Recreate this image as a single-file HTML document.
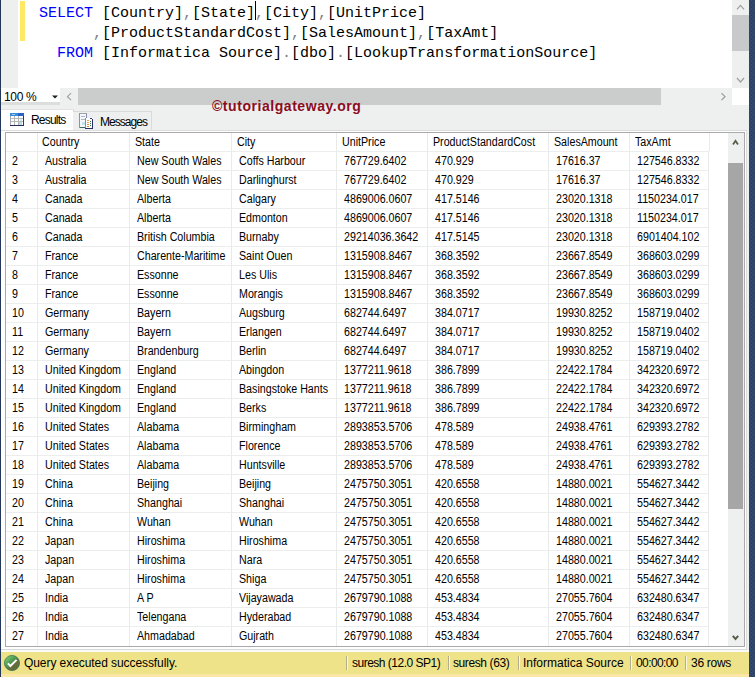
<!DOCTYPE html>
<html><head><meta charset="utf-8">
<style>
*{margin:0;padding:0;box-sizing:border-box}
html,body{width:755px;height:677px;overflow:hidden;background:#eef0f0;position:relative;font-family:"Liberation Sans",sans-serif}
.a{position:absolute}
.navyL{position:absolute;left:0;top:0;width:1px;height:677px;background:#22375a}
.navyR{position:absolute;left:749px;top:0;width:6px;height:677px}
.code{position:absolute;left:39px;font-family:"Liberation Mono",monospace;font-size:15px;line-height:20px;white-space:pre;color:#000}
.kw{color:#0000ff} .gr{color:#808080}
.t{position:absolute;font-size:12px;line-height:18px;white-space:pre;color:#000;transform:scaleX(0.89);transform-origin:0 0}
.vl{position:absolute;width:1px;background:#e9ebeb}
.hl{position:absolute;left:6px;width:702px;height:1px;background:#eceeee}
</style></head><body>
<div class="navyL"></div>
<svg class="navyR" width="6" height="677"><defs><pattern id="dp" x="0" y="0" width="4" height="4" patternUnits="userSpaceOnUse"><rect width="4" height="4" fill="#31466b"/><rect x="0" y="1" width="1" height="1" fill="#28385a"/><rect x="2" y="3" width="1" height="1" fill="#28385a"/><rect x="0" y="2" width="1" height="1" fill="#384d72"/><rect x="2" y="0" width="1" height="1" fill="#384d72"/></pattern></defs><rect width="6" height="677" fill="url(#dp)" shape-rendering="crispEdges"/></svg>

<!-- editor -->
<div class="a" style="left:1px;top:0;width:17px;height:88px;background:#eef0f0"></div>
<div class="a" style="left:18px;top:0;width:714px;height:88px;background:#fff"></div>
<div class="a" style="left:20px;top:1px;width:5px;height:40px;background:#ffe866"></div>
<div class="code" style="top:4px"><span class="kw">SELECT</span> [Country]<span class="gr">,</span>[State]<span class="gr">,</span>[City]<span class="gr">,</span>[UnitPrice]</div>
<div class="code" style="top:24px">      <span class="gr">,</span>[ProductStandardCost]<span class="gr">,</span>[SalesAmount]<span class="gr">,</span>[TaxAmt]</div>
<div class="code" style="top:44px">  <span class="kw">FROM</span> [Informatica Source]<span class="gr">.</span>[dbo]<span class="gr">.</span>[LookupTransformationSource]</div>
<div class="a" style="left:255px;top:1px;width:1px;height:19px;background:#000"></div>

<!-- editor vscroll -->
<div class="a" style="left:732px;top:0;width:17px;height:88px;background:#eef0f0"></div>
<div class="a" style="left:732px;top:15px;width:17px;height:36px;background:#c8c9ca"></div>
<svg class="a" style="left:732px;top:0" width="17" height="88"><polyline points="5,9.3 8.5,5.3 12,9.3" fill="none" stroke="#9e9e9e" stroke-width="1.2"/><polyline points="5,78 8.5,82 12,78" fill="none" stroke="#9e9e9e" stroke-width="1.2"/></svg>

<!-- zoom bar -->
<div class="a" style="left:1px;top:88px;width:59px;height:14px;background:#fff"></div>
<div class="a" style="left:1px;top:102px;width:59px;height:3px;background:#dcdddd"></div>
<div class="a" style="left:4px;top:90px;font-size:12px;letter-spacing:-0.35px;line-height:14px;color:#000">100 %</div>
<svg class="a" style="left:50px;top:94px" width="10" height="6"><polygon points="2,1.5 8,1.5 5,4.5" fill="#1e1e1e"/></svg>
<svg class="a" style="left:64px;top:90px" width="10" height="12"><polyline points="7,3.2 3.5,6.7 7,10.2" fill="none" stroke="#a0a0a0" stroke-width="1.2"/></svg>
<div class="a" style="left:78px;top:88px;width:583px;height:17px;background:#cbcccc"></div>
<svg class="a" style="left:718px;top:90px" width="10" height="12"><polyline points="3.5,3.2 7,6.7 3.5,10.2" fill="none" stroke="#9a9a9a" stroke-width="1.2"/></svg>
<div class="a" style="left:732px;top:88px;width:17px;height:17px;background:#fff"></div>

<!-- watermark -->
<div class="a" style="left:212px;top:96.5px;font-size:14px;letter-spacing:0.55px;line-height:18px;font-weight:bold;color:#8b0d1e;white-space:pre">©tutorialgateway.org</div>

<!-- tabs -->
<div class="a" style="left:1px;top:109px;width:73px;height:23px;background:#fff;border-top:1px solid #e2e2e2;border-right:1px solid #dadada"></div>
<div class="a" style="left:73px;top:111px;width:79px;height:20px;background:#eef0f0;border:1px solid #dadada;border-left:none;border-bottom:none"></div>
<div class="a" style="left:31px;top:112px;font-size:12px;letter-spacing:-0.8px;line-height:16px">Results</div>
<div class="a" style="left:100px;top:114px;font-size:12px;letter-spacing:-0.95px;line-height:16px">Messages</div>
<svg class="a" style="left:10px;top:113px" width="14" height="13" shape-rendering="crispEdges">
 <rect x="0" y="0" width="14" height="13" fill="#fff"/>
 <rect x="0" y="0" width="14" height="3" fill="#3a8fdc"/>
 <rect x="8" y="0" width="6" height="3" fill="#2a62c8"/>
 <rect x="2" y="1" width="3" height="1" fill="#9cc8f0"/>
 <rect x="0" y="3" width="1" height="10" fill="#a8a8b8"/>
 <rect x="4" y="3" width="1" height="9" fill="#b4b4b4"/>
 <rect x="8" y="3" width="1" height="9" fill="#b4b4b4"/>
 <rect x="1" y="5" width="12" height="1" fill="#b8b8b8"/>
 <rect x="1" y="8" width="12" height="1" fill="#b8b8b8"/>
 <rect x="10" y="6" width="2" height="2" fill="#c8ecf8"/>
 <rect x="9" y="9" width="3" height="3" fill="#a8e0f8"/>
 <rect x="13" y="3" width="1" height="10" fill="#303858"/>
 <rect x="0" y="12" width="14" height="1" fill="#2a2f58"/>
</svg>
<svg class="a" style="left:79px;top:113px" width="15" height="16" shape-rendering="crispEdges">
 <rect x="0" y="0" width="8" height="15" fill="#f4f8fc"/>
 <rect x="0" y="0" width="8" height="1" fill="#a0a0a8"/>
 <rect x="0" y="0" width="1" height="15" fill="#8c8cc8"/>
 <rect x="1" y="14" width="7" height="1" fill="#3a6a58"/>
 <rect x="7" y="1" width="1" height="6" fill="#8888b0"/>
 <rect x="2" y="3" width="4" height="1" fill="#a8b8c8"/>
 <rect x="2" y="6" width="4" height="1" fill="#b0b8c0"/>
 <rect x="3" y="9" width="3" height="3" fill="#c0e4f4"/>
 <rect x="6" y="5" width="8" height="11" fill="#ffffff"/>
 <rect x="13" y="6" width="1" height="10" fill="#2a2f6a"/>
 <rect x="6" y="15" width="8" height="1" fill="#2a2f6a"/>
 <rect x="11" y="5" width="2" height="1" fill="#3a3a7a"/>
 <rect x="6" y="5" width="1" height="10" fill="#8888c0"/>
 <rect x="8" y="7" width="2" height="1" fill="#f0a040"/>
 <rect x="8" y="9" width="2" height="1" fill="#f0a040"/>
 <rect x="8" y="11" width="2" height="1" fill="#e89030"/>
 <rect x="8" y="13" width="2" height="1" fill="#e08020"/>
 <rect x="11" y="8" width="1" height="1" fill="#2a6a4a"/>
 <rect x="11" y="10" width="1" height="1" fill="#2a6a4a"/>
 <rect x="11" y="12" width="1" height="1" fill="#1a7a4a"/>
</svg>

<!-- grid frame -->
<div class="a" style="left:1px;top:130px;width:746px;height:520px;background:#fff;border-top:1px solid #dcdcdc;border-right:1px solid #dcdcdc;border-bottom:1px solid #d8d8d8"></div>
<div class="a" style="left:5px;top:132px;width:740px;height:515px;border:1px solid #a8a8ad;background:#fff"></div>

<div class="a" style="left:6px;top:151px;width:703px;height:1px;background:#e8e8e8"></div>
<div class="t h" style="left:42px;top:133px">Country</div>
<div class="t h" style="left:135px;top:133px">State</div>
<div class="t h" style="left:237px;top:133px">City</div>
<div class="t h" style="left:342px;top:133px">UnitPrice</div>
<div class="t h" style="left:433px;top:133px">ProductStandardCost</div>
<div class="t h" style="left:554px;top:133px">SalesAmount</div>
<div class="t h" style="left:635px;top:133px">TaxAmt</div>
<div class="vl" style="left:37px;top:133px;height:18px"></div>
<div class="vl" style="left:129px;top:133px;height:18px"></div>
<div class="vl" style="left:231px;top:133px;height:18px"></div>
<div class="vl" style="left:336px;top:133px;height:18px"></div>
<div class="vl" style="left:427px;top:133px;height:18px"></div>
<div class="vl" style="left:548px;top:133px;height:18px"></div>
<div class="vl" style="left:629px;top:133px;height:18px"></div>
<div class="vl" style="left:709px;top:133px;height:18px"></div>
<div class="hl" style="top:151px"></div>
<div class="t" style="left:12px;top:152px">2</div>
<div class="t" style="left:45px;top:152px">Australia</div>
<div class="t" style="left:137px;top:152px">New South Wales</div>
<div class="t" style="left:239px;top:152px">Coffs Harbour</div>
<div class="t" style="left:344px;top:152px">767729.6402</div>
<div class="t" style="left:435px;top:152px">470.929</div>
<div class="t" style="left:556px;top:152px">17616.37</div>
<div class="t" style="left:637px;top:152px">127546.8332</div>
<div class="hl" style="top:170px"></div>
<div class="t" style="left:12px;top:171px">3</div>
<div class="t" style="left:45px;top:171px">Australia</div>
<div class="t" style="left:137px;top:171px">New South Wales</div>
<div class="t" style="left:239px;top:171px">Darlinghurst</div>
<div class="t" style="left:344px;top:171px">767729.6402</div>
<div class="t" style="left:435px;top:171px">470.929</div>
<div class="t" style="left:556px;top:171px">17616.37</div>
<div class="t" style="left:637px;top:171px">127546.8332</div>
<div class="hl" style="top:189px"></div>
<div class="t" style="left:12px;top:190px">4</div>
<div class="t" style="left:45px;top:190px">Canada</div>
<div class="t" style="left:137px;top:190px">Alberta</div>
<div class="t" style="left:239px;top:190px">Calgary</div>
<div class="t" style="left:344px;top:190px">4869006.0607</div>
<div class="t" style="left:435px;top:190px">417.5146</div>
<div class="t" style="left:556px;top:190px">23020.1318</div>
<div class="t" style="left:637px;top:190px">1150234.017</div>
<div class="hl" style="top:208px"></div>
<div class="t" style="left:12px;top:209px">5</div>
<div class="t" style="left:45px;top:209px">Canada</div>
<div class="t" style="left:137px;top:209px">Alberta</div>
<div class="t" style="left:239px;top:209px">Edmonton</div>
<div class="t" style="left:344px;top:209px">4869006.0607</div>
<div class="t" style="left:435px;top:209px">417.5146</div>
<div class="t" style="left:556px;top:209px">23020.1318</div>
<div class="t" style="left:637px;top:209px">1150234.017</div>
<div class="hl" style="top:227px"></div>
<div class="t" style="left:12px;top:228px">6</div>
<div class="t" style="left:45px;top:228px">Canada</div>
<div class="t" style="left:137px;top:228px">British Columbia</div>
<div class="t" style="left:239px;top:228px">Burnaby</div>
<div class="t" style="left:344px;top:228px">29214036.3642</div>
<div class="t" style="left:435px;top:228px">417.5145</div>
<div class="t" style="left:556px;top:228px">23020.1318</div>
<div class="t" style="left:637px;top:228px">6901404.102</div>
<div class="hl" style="top:246px"></div>
<div class="t" style="left:12px;top:247px">7</div>
<div class="t" style="left:45px;top:247px">France</div>
<div class="t" style="left:137px;top:247px">Charente-Maritime</div>
<div class="t" style="left:239px;top:247px">Saint Ouen</div>
<div class="t" style="left:344px;top:247px">1315908.8467</div>
<div class="t" style="left:435px;top:247px">368.3592</div>
<div class="t" style="left:556px;top:247px">23667.8549</div>
<div class="t" style="left:637px;top:247px">368603.0299</div>
<div class="hl" style="top:265px"></div>
<div class="t" style="left:12px;top:266px">8</div>
<div class="t" style="left:45px;top:266px">France</div>
<div class="t" style="left:137px;top:266px">Essonne</div>
<div class="t" style="left:239px;top:266px">Les Ulis</div>
<div class="t" style="left:344px;top:266px">1315908.8467</div>
<div class="t" style="left:435px;top:266px">368.3592</div>
<div class="t" style="left:556px;top:266px">23667.8549</div>
<div class="t" style="left:637px;top:266px">368603.0299</div>
<div class="hl" style="top:284px"></div>
<div class="t" style="left:12px;top:285px">9</div>
<div class="t" style="left:45px;top:285px">France</div>
<div class="t" style="left:137px;top:285px">Essonne</div>
<div class="t" style="left:239px;top:285px">Morangis</div>
<div class="t" style="left:344px;top:285px">1315908.8467</div>
<div class="t" style="left:435px;top:285px">368.3592</div>
<div class="t" style="left:556px;top:285px">23667.8549</div>
<div class="t" style="left:637px;top:285px">368603.0299</div>
<div class="hl" style="top:303px"></div>
<div class="t" style="left:12px;top:304px">10</div>
<div class="t" style="left:45px;top:304px">Germany</div>
<div class="t" style="left:137px;top:304px">Bayern</div>
<div class="t" style="left:239px;top:304px">Augsburg</div>
<div class="t" style="left:344px;top:304px">682744.6497</div>
<div class="t" style="left:435px;top:304px">384.0717</div>
<div class="t" style="left:556px;top:304px">19930.8252</div>
<div class="t" style="left:637px;top:304px">158719.0402</div>
<div class="hl" style="top:322px"></div>
<div class="t" style="left:12px;top:323px">11</div>
<div class="t" style="left:45px;top:323px">Germany</div>
<div class="t" style="left:137px;top:323px">Bayern</div>
<div class="t" style="left:239px;top:323px">Erlangen</div>
<div class="t" style="left:344px;top:323px">682744.6497</div>
<div class="t" style="left:435px;top:323px">384.0717</div>
<div class="t" style="left:556px;top:323px">19930.8252</div>
<div class="t" style="left:637px;top:323px">158719.0402</div>
<div class="hl" style="top:341px"></div>
<div class="t" style="left:12px;top:342px">12</div>
<div class="t" style="left:45px;top:342px">Germany</div>
<div class="t" style="left:137px;top:342px">Brandenburg</div>
<div class="t" style="left:239px;top:342px">Berlin</div>
<div class="t" style="left:344px;top:342px">682744.6497</div>
<div class="t" style="left:435px;top:342px">384.0717</div>
<div class="t" style="left:556px;top:342px">19930.8252</div>
<div class="t" style="left:637px;top:342px">158719.0402</div>
<div class="hl" style="top:360px"></div>
<div class="t" style="left:12px;top:361px">13</div>
<div class="t" style="left:45px;top:361px">United Kingdom</div>
<div class="t" style="left:137px;top:361px">England</div>
<div class="t" style="left:239px;top:361px">Abingdon</div>
<div class="t" style="left:344px;top:361px">1377211.9618</div>
<div class="t" style="left:435px;top:361px">386.7899</div>
<div class="t" style="left:556px;top:361px">22422.1784</div>
<div class="t" style="left:637px;top:361px">342320.6972</div>
<div class="hl" style="top:379px"></div>
<div class="t" style="left:12px;top:380px">14</div>
<div class="t" style="left:45px;top:380px">United Kingdom</div>
<div class="t" style="left:137px;top:380px">England</div>
<div class="t" style="left:239px;top:380px">Basingstoke Hants</div>
<div class="t" style="left:344px;top:380px">1377211.9618</div>
<div class="t" style="left:435px;top:380px">386.7899</div>
<div class="t" style="left:556px;top:380px">22422.1784</div>
<div class="t" style="left:637px;top:380px">342320.6972</div>
<div class="hl" style="top:398px"></div>
<div class="t" style="left:12px;top:399px">15</div>
<div class="t" style="left:45px;top:399px">United Kingdom</div>
<div class="t" style="left:137px;top:399px">England</div>
<div class="t" style="left:239px;top:399px">Berks</div>
<div class="t" style="left:344px;top:399px">1377211.9618</div>
<div class="t" style="left:435px;top:399px">386.7899</div>
<div class="t" style="left:556px;top:399px">22422.1784</div>
<div class="t" style="left:637px;top:399px">342320.6972</div>
<div class="hl" style="top:417px"></div>
<div class="t" style="left:12px;top:418px">16</div>
<div class="t" style="left:45px;top:418px">United States</div>
<div class="t" style="left:137px;top:418px">Alabama</div>
<div class="t" style="left:239px;top:418px">Birmingham</div>
<div class="t" style="left:344px;top:418px">2893853.5706</div>
<div class="t" style="left:435px;top:418px">478.589</div>
<div class="t" style="left:556px;top:418px">24938.4761</div>
<div class="t" style="left:637px;top:418px">629393.2782</div>
<div class="hl" style="top:436px"></div>
<div class="t" style="left:12px;top:437px">17</div>
<div class="t" style="left:45px;top:437px">United States</div>
<div class="t" style="left:137px;top:437px">Alabama</div>
<div class="t" style="left:239px;top:437px">Florence</div>
<div class="t" style="left:344px;top:437px">2893853.5706</div>
<div class="t" style="left:435px;top:437px">478.589</div>
<div class="t" style="left:556px;top:437px">24938.4761</div>
<div class="t" style="left:637px;top:437px">629393.2782</div>
<div class="hl" style="top:455px"></div>
<div class="t" style="left:12px;top:456px">18</div>
<div class="t" style="left:45px;top:456px">United States</div>
<div class="t" style="left:137px;top:456px">Alabama</div>
<div class="t" style="left:239px;top:456px">Huntsville</div>
<div class="t" style="left:344px;top:456px">2893853.5706</div>
<div class="t" style="left:435px;top:456px">478.589</div>
<div class="t" style="left:556px;top:456px">24938.4761</div>
<div class="t" style="left:637px;top:456px">629393.2782</div>
<div class="hl" style="top:474px"></div>
<div class="t" style="left:12px;top:475px">19</div>
<div class="t" style="left:45px;top:475px">China</div>
<div class="t" style="left:137px;top:475px">Beijing</div>
<div class="t" style="left:239px;top:475px">Beijing</div>
<div class="t" style="left:344px;top:475px">2475750.3051</div>
<div class="t" style="left:435px;top:475px">420.6558</div>
<div class="t" style="left:556px;top:475px">14880.0021</div>
<div class="t" style="left:637px;top:475px">554627.3442</div>
<div class="hl" style="top:493px"></div>
<div class="t" style="left:12px;top:494px">20</div>
<div class="t" style="left:45px;top:494px">China</div>
<div class="t" style="left:137px;top:494px">Shanghai</div>
<div class="t" style="left:239px;top:494px">Shanghai</div>
<div class="t" style="left:344px;top:494px">2475750.3051</div>
<div class="t" style="left:435px;top:494px">420.6558</div>
<div class="t" style="left:556px;top:494px">14880.0021</div>
<div class="t" style="left:637px;top:494px">554627.3442</div>
<div class="hl" style="top:512px"></div>
<div class="t" style="left:12px;top:513px">21</div>
<div class="t" style="left:45px;top:513px">China</div>
<div class="t" style="left:137px;top:513px">Wuhan</div>
<div class="t" style="left:239px;top:513px">Wuhan</div>
<div class="t" style="left:344px;top:513px">2475750.3051</div>
<div class="t" style="left:435px;top:513px">420.6558</div>
<div class="t" style="left:556px;top:513px">14880.0021</div>
<div class="t" style="left:637px;top:513px">554627.3442</div>
<div class="hl" style="top:531px"></div>
<div class="t" style="left:12px;top:532px">22</div>
<div class="t" style="left:45px;top:532px">Japan</div>
<div class="t" style="left:137px;top:532px">Hiroshima</div>
<div class="t" style="left:239px;top:532px">Hiroshima</div>
<div class="t" style="left:344px;top:532px">2475750.3051</div>
<div class="t" style="left:435px;top:532px">420.6558</div>
<div class="t" style="left:556px;top:532px">14880.0021</div>
<div class="t" style="left:637px;top:532px">554627.3442</div>
<div class="hl" style="top:550px"></div>
<div class="t" style="left:12px;top:551px">23</div>
<div class="t" style="left:45px;top:551px">Japan</div>
<div class="t" style="left:137px;top:551px">Hiroshima</div>
<div class="t" style="left:239px;top:551px">Nara</div>
<div class="t" style="left:344px;top:551px">2475750.3051</div>
<div class="t" style="left:435px;top:551px">420.6558</div>
<div class="t" style="left:556px;top:551px">14880.0021</div>
<div class="t" style="left:637px;top:551px">554627.3442</div>
<div class="hl" style="top:569px"></div>
<div class="t" style="left:12px;top:570px">24</div>
<div class="t" style="left:45px;top:570px">Japan</div>
<div class="t" style="left:137px;top:570px">Hiroshima</div>
<div class="t" style="left:239px;top:570px">Shiga</div>
<div class="t" style="left:344px;top:570px">2475750.3051</div>
<div class="t" style="left:435px;top:570px">420.6558</div>
<div class="t" style="left:556px;top:570px">14880.0021</div>
<div class="t" style="left:637px;top:570px">554627.3442</div>
<div class="hl" style="top:588px"></div>
<div class="t" style="left:12px;top:589px">25</div>
<div class="t" style="left:45px;top:589px">India</div>
<div class="t" style="left:137px;top:589px">A P</div>
<div class="t" style="left:239px;top:589px">Vijayawada</div>
<div class="t" style="left:344px;top:589px">2679790.1088</div>
<div class="t" style="left:435px;top:589px">453.4834</div>
<div class="t" style="left:556px;top:589px">27055.7604</div>
<div class="t" style="left:637px;top:589px">632480.6347</div>
<div class="hl" style="top:607px"></div>
<div class="t" style="left:12px;top:608px">26</div>
<div class="t" style="left:45px;top:608px">India</div>
<div class="t" style="left:137px;top:608px">Telengana</div>
<div class="t" style="left:239px;top:608px">Hyderabad</div>
<div class="t" style="left:344px;top:608px">2679790.1088</div>
<div class="t" style="left:435px;top:608px">453.4834</div>
<div class="t" style="left:556px;top:608px">27055.7604</div>
<div class="t" style="left:637px;top:608px">632480.6347</div>
<div class="hl" style="top:626px"></div>
<div class="t" style="left:12px;top:627px">27</div>
<div class="t" style="left:45px;top:627px">India</div>
<div class="t" style="left:137px;top:627px">Ahmadabad</div>
<div class="t" style="left:239px;top:627px">Gujrath</div>
<div class="t" style="left:344px;top:627px">2679790.1088</div>
<div class="t" style="left:435px;top:627px">453.4834</div>
<div class="t" style="left:556px;top:627px">27055.7604</div>
<div class="t" style="left:637px;top:627px">632480.6347</div>
<div class="vl" style="left:37px;top:151px;height:495px"></div><div class="vl" style="left:129px;top:151px;height:495px"></div><div class="vl" style="left:231px;top:151px;height:495px"></div><div class="vl" style="left:336px;top:151px;height:495px"></div><div class="vl" style="left:427px;top:151px;height:495px"></div><div class="vl" style="left:548px;top:151px;height:495px"></div><div class="vl" style="left:629px;top:151px;height:495px"></div><div class="vl" style="left:708px;top:151px;height:495px"></div>

<!-- grid vscroll -->
<div class="a" style="left:728px;top:133px;width:16px;height:513px;background:#eef0f0"></div>
<div class="a" style="left:728px;top:163px;width:15px;height:346px;background:#a6a6a6"></div>
<svg class="a" style="left:728px;top:133px" width="16" height="513"><polyline points="5,11.5 7.5,7.8 10,11.5" fill="none" stroke="#555f48" stroke-width="1.8"/><polyline points="4.8,502.8 7.5,506 10.2,502.8" fill="none" stroke="#555f48" stroke-width="2"/></svg>

<!-- bottom band -->

<div class="a" style="left:1px;top:650px;width:748px;height:2px;background:#f9fafa"></div>
<!-- status bar -->
<div class="a" style="left:1px;top:652px;width:748px;height:22px;background:#eee389"></div>
<div class="a" style="left:1px;top:674px;width:748px;height:3px;background:#fde5a6"></div>
<svg class="a" style="left:4px;top:655px" width="16" height="16">
 <defs><linearGradient id="g1" x1="0" y1="0" x2="1" y2="1"><stop offset="0" stop-color="#9ad890"/><stop offset="0.3" stop-color="#5eae5c"/><stop offset="0.5" stop-color="#4a8a4a"/><stop offset="0.56" stop-color="#66703e"/><stop offset="1" stop-color="#5e6838"/></linearGradient></defs>
 <circle cx="8" cy="8" r="7.6" fill="url(#g1)" stroke="#2e6a52" stroke-width="0.7"/>
 <polyline points="3.9,8.4 6.3,11 12.6,4.9" fill="none" stroke="#fff" stroke-width="2"/>
</svg>
<div class="a" style="left:24px;top:655px;font-size:12px;letter-spacing:-0.07px;line-height:16px;white-space:pre">Query executed successfully.</div>
<div class="a" style="left:346px;top:656px;width:1px;height:14px;background:#b4ae8c;box-shadow:1px 0 0 #fbf8e0"></div>
<div class="a" style="left:352px;top:655px;font-size:12px;letter-spacing:-0.5px;line-height:16px;white-space:pre">suresh (12.0 SP1)</div>
<div class="a" style="left:448px;top:656px;width:1px;height:14px;background:#b4ae8c;box-shadow:1px 0 0 #fbf8e0"></div>
<div class="a" style="left:453px;top:655px;font-size:12px;letter-spacing:-0.4px;line-height:16px;white-space:pre">suresh (63)</div>
<div class="a" style="left:518px;top:656px;width:1px;height:14px;background:#b4ae8c;box-shadow:1px 0 0 #fbf8e0"></div>
<div class="a" style="left:523px;top:655px;font-size:12px;line-height:16px;white-space:pre">Informatica Source</div>
<div class="a" style="left:630px;top:656px;width:1px;height:14px;background:#b4ae8c;box-shadow:1px 0 0 #fbf8e0"></div>
<div class="a" style="left:636px;top:655px;font-size:12px;letter-spacing:-0.6px;line-height:16px;white-space:pre">00:00:00</div>
<div class="a" style="left:685px;top:656px;width:1px;height:14px;background:#b4ae8c;box-shadow:1px 0 0 #fbf8e0"></div>
<div class="a" style="left:691px;top:655px;font-size:12px;letter-spacing:-0.28px;line-height:16px;white-space:pre">36 rows</div>
</body></html>
